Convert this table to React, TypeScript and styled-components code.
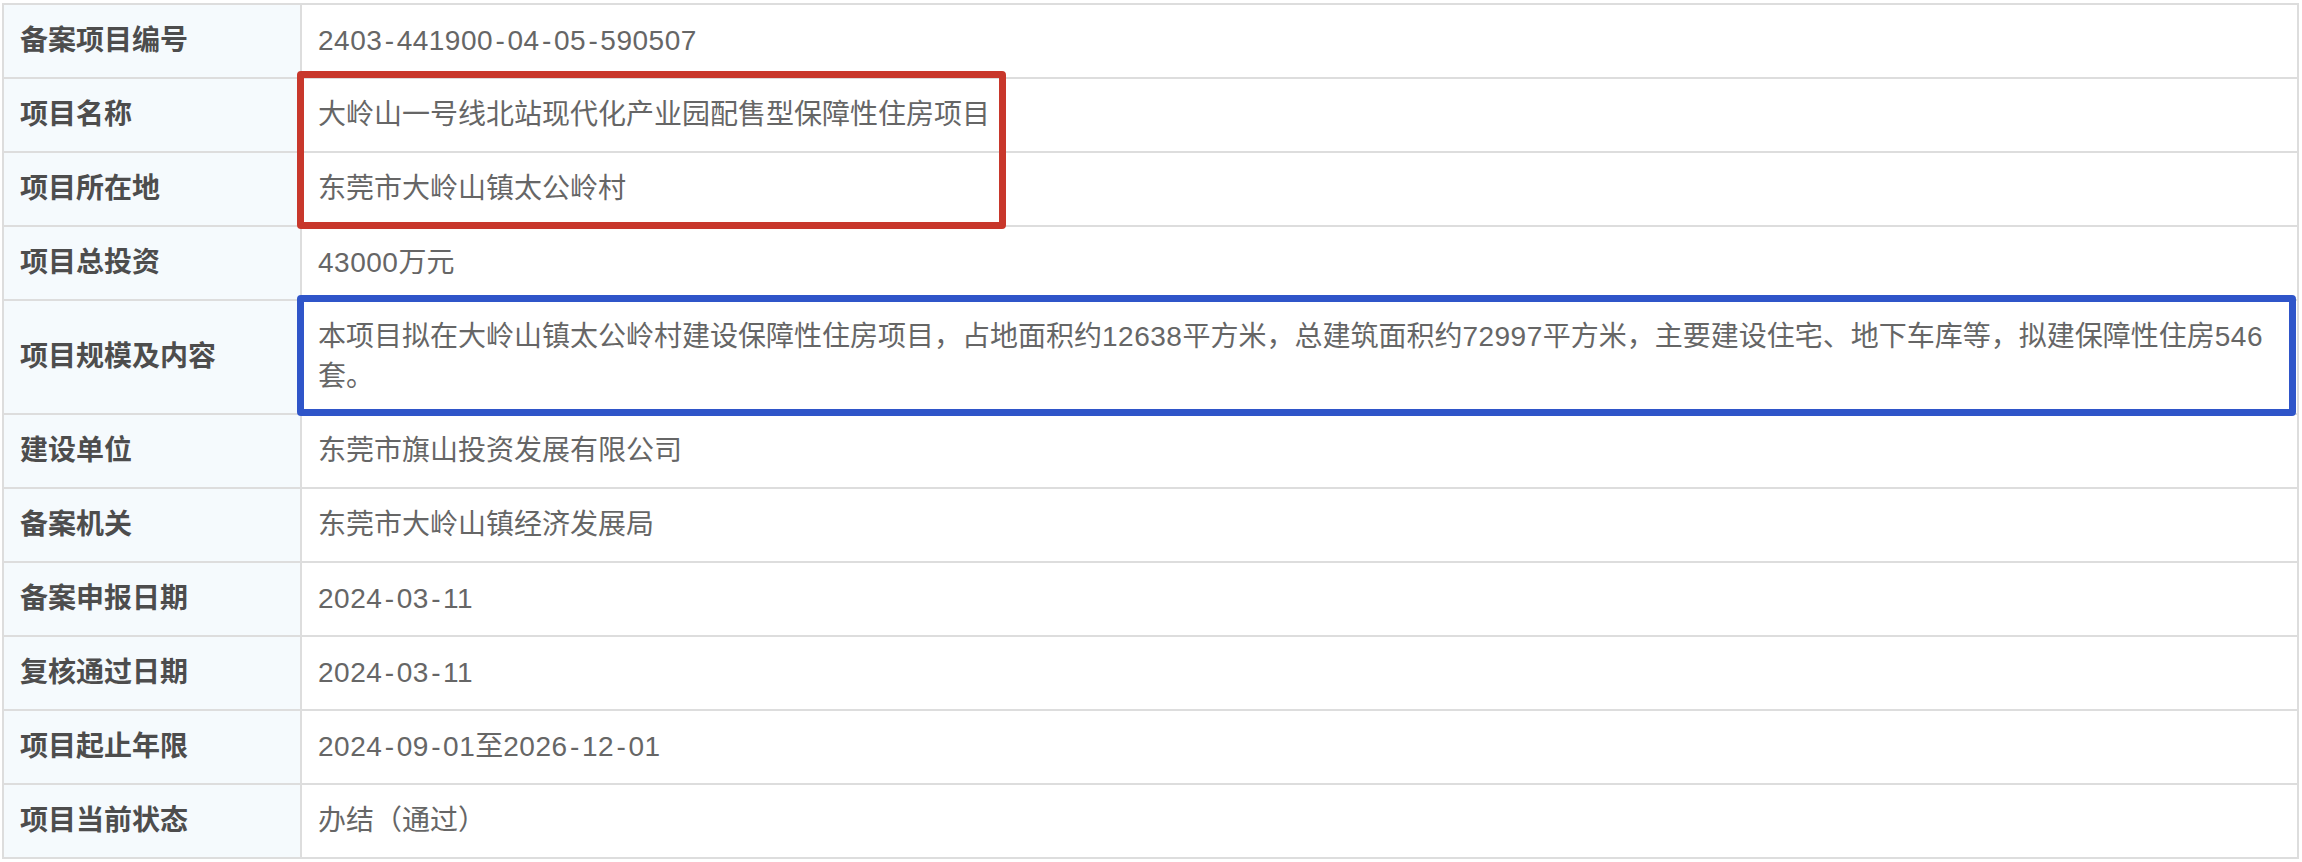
import React from 'react';
import styled, { createGlobalStyle } from 'styled-components';

const GlobalStyle = createGlobalStyle`
	html, body {
		margin: 0;
		padding: 0;
		background: #fff;
	}
	body {
		font-family: "Liberation Sans", "Noto Sans CJK SC", sans-serif;
	}
`;

const Page = styled.div`
	padding: 3px 3px 0 2px;
`;

const Table = styled.div`
	position: relative;
	border: 2px solid #dddddd;
	width: 2297px;
	box-sizing: border-box;
`;

const Row = styled.div`
	display: grid;
	grid-template-columns: 298px 1fr;
	& + & {
		border-top: 2px solid #dddddd;
	}
`;

const Label = styled.div`
	display: flex;
	align-items: center;
	background-color: #f5fafd;
	border-right: 2px solid #dddddd;
	padding: 16px 16px;
	font-size: 28px;
	line-height: 40px;
	font-weight: 700;
	color: #4d4d4d;
`;

const Value = styled.div`
	padding: 16px 16px;
	font-size: 28px;
	line-height: 40px;
	color: #666666;
`;

// the source font has slightly wider figures and dashes than Liberation
const Digits = styled.span`
	letter-spacing: 0.5px;
`;

const Dash = styled.span`
	padding: 0 2.5px;
`;

const Mark = styled.div<{ tone: 'red' | 'blue' }>`
	position: absolute;
	box-sizing: border-box;
	border: 7px solid ${({ tone }) => (tone === 'red' ? '#c8372b' : '#2f55c9')};
	border-radius: 4px;
	pointer-events: none;
`;

const rows: [string, string][] = [
	['备案项目编号', '2403-441900-04-05-590507'],
	['项目名称', '大岭山一号线北站现代化产业园配售型保障性住房项目'],
	['项目所在地', '东莞市大岭山镇太公岭村'],
	['项目总投资', '43000万元'],
	['项目规模及内容', '本项目拟在大岭山镇太公岭村建设保障性住房项目，占地面积约12638平方米，总建筑面积约72997平方米，主要建设住宅、地下车库等，拟建保障性住房546套。'],
	['建设单位', '东莞市旗山投资发展有限公司'],
	['备案机关', '东莞市大岭山镇经济发展局'],
	['备案申报日期', '2024-03-11'],
	['复核通过日期', '2024-03-11'],
	['项目起止年限', '2024-09-01至2026-12-01'],
	['项目当前状态', '办结（通过）'],
];

const renderValue = (text: string) =>
	text.split(/([0-9]+|-)/).map((part, i) => {
		if (part === '-') return <Dash key={i}>-</Dash>;
		if (/^[0-9]+$/.test(part)) return <Digits key={i}>{part}</Digits>;
		return part;
	});

function App() {
	return (
		<Page>
			<GlobalStyle />
			<Table>
				{rows.map(([label, value]) => (
					<Row key={label}>
						<Label>{label}</Label>
						<Value>{renderValue(value)}</Value>
					</Row>
				))}
				<Mark tone="red" style={{ left: 293, top: 66, width: 709, height: 158 }} />
				<Mark tone="blue" style={{ left: 293, top: 290, width: 1999, height: 121 }} />
			</Table>
		</Page>
	);
}

export default App;
